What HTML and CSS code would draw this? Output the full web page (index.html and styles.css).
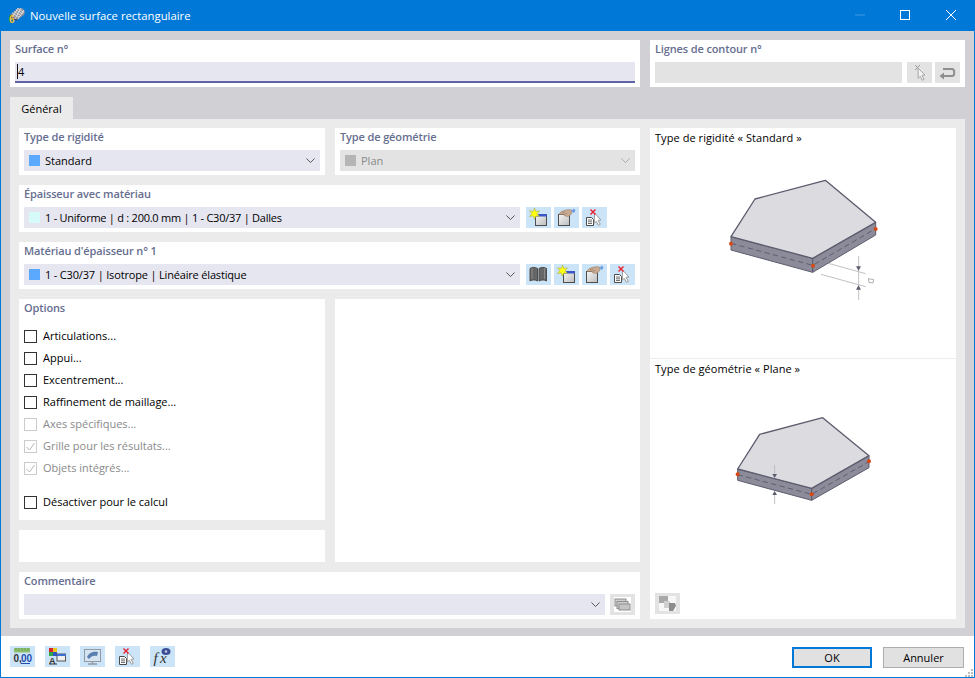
FILE: index.html
```html
<!DOCTYPE html>
<html lang="fr">
<head>
<meta charset="utf-8">
<title>Nouvelle surface rectangulaire</title>
<link rel="stylesheet" href="styles.css">
</head>
<body>
<svg class="defs" width="0" height="0" aria-hidden="true">
  <defs>
    <linearGradient id="winBody" x1="0" y1="0" x2="1" y2="1"><stop offset="0" stop-color="#f6f6f6"/><stop offset="1" stop-color="#bcbcbc"/></linearGradient>
    <symbol id="i-new" viewBox="0 0 25 21">
      <rect x="9.500" y="7.500" width="11" height="11" fill="url(#winBody)" stroke="#4d4d4d"/>
      <rect x="9" y="7" width="12" height="2.500" fill="#3c55c8"/>
      <path d="M8.500 1l1.400 3.400 3.600-.6-2.300 2.800 2.300 2.900-3.600-.6-1.400 3.400-1.400-3.400-3.600.6 2.300-2.900-2.300-2.800 3.600.6z" fill="#ffff10" stroke="#9a9a4a" stroke-width=".5"/>
    </symbol>
    <symbol id="i-edit" viewBox="0 0 25 21">
      <rect x="4.500" y="7.500" width="11" height="11" fill="url(#winBody)" stroke="#4d4d4d"/>
      <path d="M5 7.500c1-3 4-4 7-4.500 2-.5 4-.5 5.500 0l.5 3-2 2.500-2.500 1-2.500-.5-1.500-1.500z" fill="#c9a98f" stroke="#8f7663" stroke-width=".5"/>
      <path d="M8 6l3-1M10 7.500l3-1" stroke="#8f7663" stroke-width=".6"/>
      <path d="M17 4l3-2.500 1.500 2-1.500 2.500z" fill="#6f9fe0"/>
    </symbol>
    <symbol id="i-pick" viewBox="0 0 25 21">
      <path d="M4.500 10.500h5l2 2v6h-7z" fill="#fff" stroke="#4a4a4a"/>
      <path d="M6 13h4M6 14.800h4M6 16.500h4" stroke="#4a4a4a" stroke-width=".8"/>
      <path d="M12.500 6l6.500 7-3 .3 2.300 4-1.800 1-2.300-4-1.900 2z" fill="#fff" stroke="#9c9c9c"/>
      <path d="M8.500 2.500l5 5M13.500 2.500l-5 5" stroke="#e8202c" stroke-width="1.400"/>
    </symbol>
    <symbol id="i-book" viewBox="0 0 25 21">
      <path d="M4 4.500c2-1.500 5-1.500 7.500 0v12.500c-2.500-1.500-5-1.500-7.500 0z" fill="#666" stroke="#4d4d4d"/>
      <path d="M13 4.500c2.500-1.500 5.500-1.500 7.500 0v12.500c-2-1.500-5-1.500-7.500 0z" fill="#666" stroke="#4d4d4d"/>
      <path d="M6 4v11M18.500 4v11" stroke="#8a8a8a"/>
    </symbol>
  </defs>
</svg>

<div class="window">
  <header class="titlebar">
    <svg class="app-icon" viewBox="0 0 16 16" width="16" height="16">
      <path d="M1 8L9 1l5 .5L16 5l-1 3-7 5-4-1z" fill="#8d8d96"/>
      <path d="M3 6l7 4M5 4.500l7 4M7 3l7 4M9 1.500l6 4M12 1L6 12M15 3L9 12M9 1L3 11" stroke="#eaeaee" stroke-width=".8" fill="none"/>
      <path d="M1 8l3 4 4 1" stroke="#33333b" stroke-width="1" fill="none"/>
      <text x="0" y="15.500" class="app-six">6</text>
    </svg>
    <span class="title-text">Nouvelle surface rectangulaire</span>
    <div class="win-controls">
      <svg class="wc-min" width="10" height="10" viewBox="0 0 10 10"><path d="M0 5h10" stroke="#3f97e0"/></svg>
      <svg class="wc-max" width="10" height="10" viewBox="0 0 10 10"><rect x=".5" y=".5" width="9" height="9" fill="none" stroke="#fff"/></svg>
      <svg class="wc-close" width="10" height="10" viewBox="0 0 10 10"><path d="M0 0l10 10M10 0l-10 10" stroke="#fff"/></svg>
    </div>
  </header>

  <main class="content">
    <div class="top-row">
      <section class="card">
        <h2 class="label">Surface n°</h2>
        <div class="field input-active"><span class="caret"></span><span>4</span></div>
      </section>
      <section class="card">
        <h2 class="label">Lignes de contour n°</h2>
        <div class="field-row">
          <div class="field grow disabled"></div>
          <button class="icon-btn off" type="button">
            <svg viewBox="0 0 25 21" width="25" height="21"><path d="M8 3l5 5M13 3l-5 5" stroke="#9a9a9a"/><path d="M11 6l7 7-3 .3 2 4-1.800 1-2-4-2 2z" fill="#f3f3f3" stroke="#a5a5a5"/></svg>
          </button>
          <button class="icon-btn off" type="button">
            <svg viewBox="0 0 25 21" width="25" height="21"><path d="M7 14h10c3 0 3-7 0-7h-9" fill="none" stroke="#8e8e8e" stroke-width="2"/><path d="M9 10.500v7l-4.500-3.500z" fill="#8e8e8e"/></svg>
          </button>
        </div>
      </section>
    </div>

    <div class="tabs"><div class="tab">Général</div></div>

    <div class="panel">
      <div class="left-col">
        <div class="two-col">
          <section class="card">
            <h2 class="label">Type de rigidité</h2>
            <div class="field select"><i class="swatch blue"></i><span class="grow">Standard</span><svg class="chev" width="9" height="5" viewBox="0 0 11 6"><path d="M.5.500l5 5 5-5" fill="none" stroke="#555" stroke-width="1.200"/></svg></div>
          </section>
          <section class="card">
            <h2 class="label">Type de géométrie</h2>
            <div class="field select disabled"><i class="swatch grey"></i><span class="grow">Plan</span><svg class="chev" width="9" height="5" viewBox="0 0 11 6"><path d="M.5.500l5 5 5-5" fill="none" stroke="#aaa" stroke-width="1.200"/></svg></div>
          </section>
        </div>

        <section class="card">
          <h2 class="label">Épaisseur avec matériau</h2>
          <div class="field-row tools">
            <div class="field select sel-narrow"><i class="swatch cyan"></i><span class="grow tight">1 - Uniforme | d : 200.0 mm | 1 - C30/37 | Dalles</span><svg class="chev" width="9" height="5" viewBox="0 0 11 6"><path d="M.5.500l5 5 5-5" fill="none" stroke="#555" stroke-width="1.200"/></svg></div>
            <button class="icon-btn" type="button"><svg width="25" height="21"><use href="#i-new"/></svg></button>
            <button class="icon-btn" type="button"><svg width="25" height="21"><use href="#i-edit"/></svg></button>
            <button class="icon-btn" type="button"><svg width="25" height="21"><use href="#i-pick"/></svg></button>
          </div>
        </section>

        <section class="card">
          <h2 class="label">Matériau d'épaisseur n° 1</h2>
          <div class="field-row tools">
            <div class="field select sel-narrow"><i class="swatch blue"></i><span class="grow tight2">1 - C30/37 | Isotrope | Linéaire élastique</span><svg class="chev" width="9" height="5" viewBox="0 0 11 6"><path d="M.5.500l5 5 5-5" fill="none" stroke="#555" stroke-width="1.200"/></svg></div>
            <button class="icon-btn" type="button"><svg width="25" height="21"><use href="#i-book"/></svg></button>
            <button class="icon-btn" type="button"><svg width="25" height="21"><use href="#i-new"/></svg></button>
            <button class="icon-btn" type="button"><svg width="25" height="21"><use href="#i-edit"/></svg></button>
            <button class="icon-btn" type="button"><svg width="25" height="21"><use href="#i-pick"/></svg></button>
          </div>
        </section>

        <div class="two-col fill">
          <div class="stack">
            <section class="card options">
              <h2 class="label">Options</h2>
              <ul class="checks">
                <li class="check"><i class="box"></i>Articulations...</li>
                <li class="check"><i class="box"></i>Appui...</li>
                <li class="check"><i class="box"></i>Excentrement...</li>
                <li class="check"><i class="box"></i>Raffinement de maillage...</li>
                <li class="check dim"><i class="box"></i>Axes spécifiques...</li>
                <li class="check dim"><i class="box"><svg width="11" height="11" viewBox="0 0 11 11"><path d="M1.500 6l3 3 5-7" fill="none" stroke="#b5b5b5"/></svg></i>Grille pour les résultats...</li>
                <li class="check dim"><i class="box"><svg width="11" height="11" viewBox="0 0 11 11"><path d="M1.500 6l3 3 5-7" fill="none" stroke="#b5b5b5"/></svg></i>Objets intégrés...</li>
                <li class="check last"><i class="box"></i>Désactiver pour le calcul</li>
              </ul>
            </section>
            <section class="card blank grow"></section>
          </div>
          <section class="card blank"></section>
        </div>

        <section class="card">
          <h2 class="label">Commentaire</h2>
          <div class="field-row">
            <div class="field select grow"><span class="grow"></span><svg class="chev" width="9" height="5" viewBox="0 0 11 6"><path d="M.5.500l5 5 5-5" fill="none" stroke="#555" stroke-width="1.200"/></svg></div>
            <button class="icon-btn off" type="button">
              <svg viewBox="0 0 25 21" width="25" height="21"><rect x="4" y="3" width="17" height="15" fill="#fff"/><rect x="5" y="5" width="11" height="7" fill="#cfcfcf" stroke="#8e8e8e"/><rect x="7" y="7.500" width="11" height="7" fill="#cfcfcf" stroke="#8e8e8e"/><rect x="9" y="10" width="11" height="6" fill="#c4c4c4" stroke="#8e8e8e"/></svg>
            </button>
          </div>
        </section>
      </div>

      <aside class="card preview">
        <section class="pv-top">
          <h3 class="pv-title">Type de rigidité « Standard »</h3>
          <svg class="diagram d1" viewBox="0 0 600 420" width="200" height="140">
            <path d="M93 200L338 265V307L93 240Z" fill="#8b8b9a" stroke="#5c5c6e" stroke-width="3"/>
            <path d="M338 265L527 157V195L338 307Z" fill="#8b8b9a" stroke="#5c5c6e" stroke-width="3"/>
            <path d="M93 200L165 87L376 31L527 157L338 265Z" fill="#dcdce0" stroke="#5c5c6e" stroke-width="4" stroke-linejoin="round"/>
            <path d="M93 220L338 286L527 176" fill="none" stroke="#55556a" stroke-width="2.500" stroke-dasharray="16 10"/>
            <circle cx="93" cy="221" r="6" fill="#d94712"/><circle cx="339" cy="287" r="6" fill="#d94712"/><circle cx="527" cy="177" r="6" fill="#d94712"/>
            <path d="M385 280L497 311M363 313L497 350M476 258V390" stroke="#b4b4ba" stroke-width="2.500" fill="none"/>
            <path d="M468 289h15l-7.500 13zM468 359h15l-7.500-13z" fill="#5c5c6e"/>
            <path d="M505 326l16 3-2 10-12-2z" fill="#fff" stroke="#8a8a92" stroke-width="2"/>
          </svg>
        </section>
        <section class="pv-bottom">
          <h3 class="pv-title">Type de géométrie « Plane »</h3>
          <svg class="diagram d2" viewBox="0 0 600 330" width="200" height="110">
            <path d="M113 192L335 250V286L113 226Z" fill="#8b8b9a" stroke="#5c5c6e" stroke-width="3"/>
            <path d="M335 250L507 152V188L335 286Z" fill="#8b8b9a" stroke="#5c5c6e" stroke-width="3"/>
            <path d="M113 192L179 88L368 38L507 152L335 250Z" fill="#dcdce0" stroke="#5c5c6e" stroke-width="4" stroke-linejoin="round"/>
            <path d="M113 209L335 268L507 170" fill="none" stroke="#55556a" stroke-width="2.500" stroke-dasharray="16 10"/>
            <circle cx="113" cy="208" r="6" fill="#d94712"/><circle cx="335" cy="268" r="6" fill="#d94712"/><circle cx="507" cy="169" r="6" fill="#d94712"/>
            <path d="M224 180V212M224 265V297" stroke="#b4b4ba" stroke-width="2.500"/>
            <path d="M217 207h14l-7 12zM217 270h14l-7-12z" fill="#5c5c6e"/>
          </svg>
          <button class="icon-btn off pv-btn" type="button">
            <svg viewBox="0 0 25 21" width="25" height="21"><rect x="4" y="3" width="17" height="15" fill="#f7f7f7"/><rect x="4" y="3" width="9" height="7" fill="#a9a9a9"/><rect x="9" y="8" width="6" height="7" fill="#d0d0d0"/><path d="M14 10h6l1 3-3 5h-4z" fill="#8c8c8c"/></svg>
          </button>
        </section>
      </aside>
    </div>
  </main>

  <footer class="footer">
    <div class="foot-tools">
      <button class="icon-btn" type="button">
        <svg viewBox="0 0 25 21" width="25" height="21"><rect x="4" y="2" width="16" height="4.500" fill="#8cc070"/><path d="M6 2v3M9 2v3M12 2v3M15 2v3M18 2v3" stroke="#5f9a48" stroke-width=".7"/><text x="3.500" y="16" class="ico-num">0,</text><text x="11" y="16" class="ico-num blue-num">00</text><path d="M11 17.500h9" stroke="#2650b0"/></svg>
      </button>
      <button class="icon-btn" type="button">
        <svg viewBox="0 0 25 21" width="25" height="21"><rect x="4" y="2" width="4" height="4" fill="#d8242c"/><rect x="8" y="2" width="4" height="4" fill="#e8c820"/><rect x="4" y="6" width="4" height="4" fill="#2fa84a"/><rect x="8" y="6" width="4" height="4" fill="#3054c8"/><text x="4" y="18" class="ico-a">A</text><path d="M4 18h8" stroke="#333"/><rect x="12" y="8" width="8.500" height="7" fill="#f0f0f0" stroke="#555"/><rect x="12" y="8" width="9" height="2" fill="#3f6fd0"/></svg>
      </button>
      <button class="icon-btn" type="button">
        <svg viewBox="0 0 25 21" width="25" height="21"><rect x="4.500" y="3.500" width="16" height="12" fill="#d5e4f0" stroke="#8f9aa5"/><path d="M7 11c2-5 7-6 11-5l-1 4c-3-1-6 0-8 3z" fill="#5a7fae"/><path d="M12.500 15.500v2M8 18h9" stroke="#8f9aa5" stroke-width="1.300"/></svg>
      </button>
      <button class="icon-btn" type="button"><svg width="25" height="21"><use href="#i-pick"/></svg></button>
      <button class="icon-btn" type="button">
        <svg viewBox="0 0 25 21" width="25" height="21"><text x="3.500" y="17" class="ico-fx">f</text><text x="10" y="17" class="ico-fx">x</text><ellipse cx="16" cy="5.500" rx="4.500" ry="3.500" fill="#3d4f94"/><circle cx="16" cy="5.500" r="1.200" fill="#c9cdea"/></svg>
      </button>
    </div>
    <div class="foot-btns">
      <button class="btn primary" type="button">OK</button>
      <button class="btn" type="button">Annuler</button>
    </div>
    <svg class="grip" width="10" height="10" viewBox="0 0 10 10"><path d="M7 1h2v2H7zM4 4h2v2H4zM7 4h2v2H7zM1 7h2v2H1zM4 7h2v2H4zM7 7h2v2H7z" fill="#bdbdbd"/></svg>
  </footer>
</div>
</body>
</html>
```

FILE: styles.css
```css
* { box-sizing: border-box; }
html, body { margin: 0; padding: 0; }
body {
  width: 975px;
  height: 678px;
  overflow: hidden;
  font-family: "Open Sans", "Noto Sans", "Liberation Sans", sans-serif;
  font-size: 11px;
  color: #000;
  background: #fff;
}
.defs { position: absolute; }
h2, h3, ul { margin: 0; padding: 0; }
ul { list-style: none; }
i { display: block; font-style: normal; }
.grow { flex: 1 1 auto; }
.tight { letter-spacing: -.25px; }
.tight2 { letter-spacing: -.17px; }

.window {
  width: 975px;
  height: 678px;
  display: flex;
  flex-direction: column;
  border: 1px solid #0078d7;
  border-top: 0;
  background: #fff;
}

.titlebar {
  height: 31px;
  flex: none;
  display: flex;
  align-items: center;
  padding: 0 0 1px 8px;
  background: #0078d7;
  color: #fff;
}
.app-icon { margin-right: 5px; }
.app-six { font: bold 10px "Liberation Sans", sans-serif; fill: #f0c020; }
.title-text { font-size: 11.3px; }
.win-controls { margin-left: auto; display: flex; align-items: center; }
.wc-min { margin-right: 35px; }
.wc-max { margin-right: 36px; }
.wc-close { margin-right: 18px; }

.content {
  flex: 1 1 auto;
  background: #d0d0d5;
  padding: 9px 9px 8px;
  display: flex;
  flex-direction: column;
}
.top-row {
  display: grid;
  grid-template-columns: 630px 315px;
  gap: 10px;
}
.card {
  background: #fff;
  padding: 0 5px 4px;
}
.label {
  height: 22px;
  line-height: 17px;
  font-size: 11px;
  font-weight: 600;
  letter-spacing: -.13px;
  color: #666e90;
}
.field {
  height: 21px;
  display: flex;
  align-items: center;
  padding: 0 5px;
  background: #e6e6f0;
}
.field.disabled { background: #e3e3e3; color: #8a8a8a; }
.input-active {
  padding: 0 2px;
  border-bottom: 2px solid #6063a8;
}
.caret { width: 1px; height: 15px; background: #111; }
.field-row { display: flex; gap: 3px; }
.field-row .field.grow { margin-right: 2px; }
.tools .sel-narrow { width: 496px; flex: none; margin-right: 3px; }
.select .chev { flex: none; }
.swatch { width: 11px; height: 11px; margin-right: 5px; flex: none; }
.swatch.blue { background: #5aa9ff; }
.swatch.grey { background: #b5b5b5; }
.swatch.cyan { background: #d6fafa; }

.icon-btn {
  width: 25px;
  height: 21px;
  flex: none;
  padding: 0;
  border: 0;
  background: #cce4f7;
  display: block;
}
.icon-btn svg { display: block; }
.icon-btn.off { background: #e3e3e3; }

.tabs { margin-top: 10px; height: 22px; flex: none; }
.tab {
  width: 63px;
  height: 22px;
  line-height: 23px;
  text-align: center;
  background: #ebebeb;
}

.panel {
  flex: 1 1 auto;
  background: #ebebeb;
  padding: 9px;
  display: grid;
  grid-template-columns: 621px 306px;
  gap: 10px;
}
.left-col { display: flex; flex-direction: column; gap: 10px; }
.two-col { display: grid; grid-template-columns: 306px 305px; gap: 10px; }
.two-col.fill { height: 263px; }
.stack { display: flex; flex-direction: column; gap: 10px; }
.options { height: 221px; }
.blank { padding: 0; }
.checks { margin-top: 4px; }
.check {
  height: 22px;
  display: flex;
  align-items: center;
  line-height: 20px;
  padding-bottom: 1px;
}
.check.last { margin-top: 12px; }
.box {
  width: 13px;
  height: 13px;
  margin-right: 6px;
  border: 1px solid #333;
  background: #fff;
  flex: none;
  position: relative;
  top: 1px;
}
.box svg { display: block; }
.dim { color: #8a8a8a; }
.dim .box { border-color: #ccc; }

.preview { padding: 0; display: flex; flex-direction: column; }
.pv-top { height: 231px; border-bottom: 1px solid #ececec; flex: none; }
.pv-bottom { flex: 1 1 auto; display: flex; flex-direction: column; }
.pv-title {
  font-size: 11px;
  font-weight: 400;
  line-height: 20px;
  padding-left: 5px;
  letter-spacing: .06px;
  color: #000;
}
.diagram { display: block; margin-left: 50px; filter: blur(.3px); }
.d1 { margin-top: 22px; }
.d2 { margin-top: 26px; }
.pv-btn { margin: auto 0 5px 5px; }

.footer {
  height: 42px;
  flex: none;
  display: flex;
  align-items: flex-start;
  padding: 10px 10px 0 9px;
  position: relative;
}
.foot-tools { display: flex; gap: 10px; }
.foot-btns { margin-left: auto; display: flex; gap: 11px; margin-top: 1px; }
.btn {
  width: 81px;
  height: 21px;
  padding: 0 0 1px;
  border: 1px solid #adadad;
  background: #e1e1e1;
  font: inherit;
  color: #000;
}
.btn.primary { width: 80px; border: 2px solid #0078d7; }
.grip { position: absolute; right: 0; bottom: 0; }
.ico-num { font: bold 10px "Liberation Sans", sans-serif; fill: #333; }
.blue-num { fill: #2650b0; }
.ico-a { font: bold 9px "Liberation Sans", sans-serif; fill: #333; }
.ico-fx { font: italic 15px "Liberation Serif", serif; fill: #333; }
```
